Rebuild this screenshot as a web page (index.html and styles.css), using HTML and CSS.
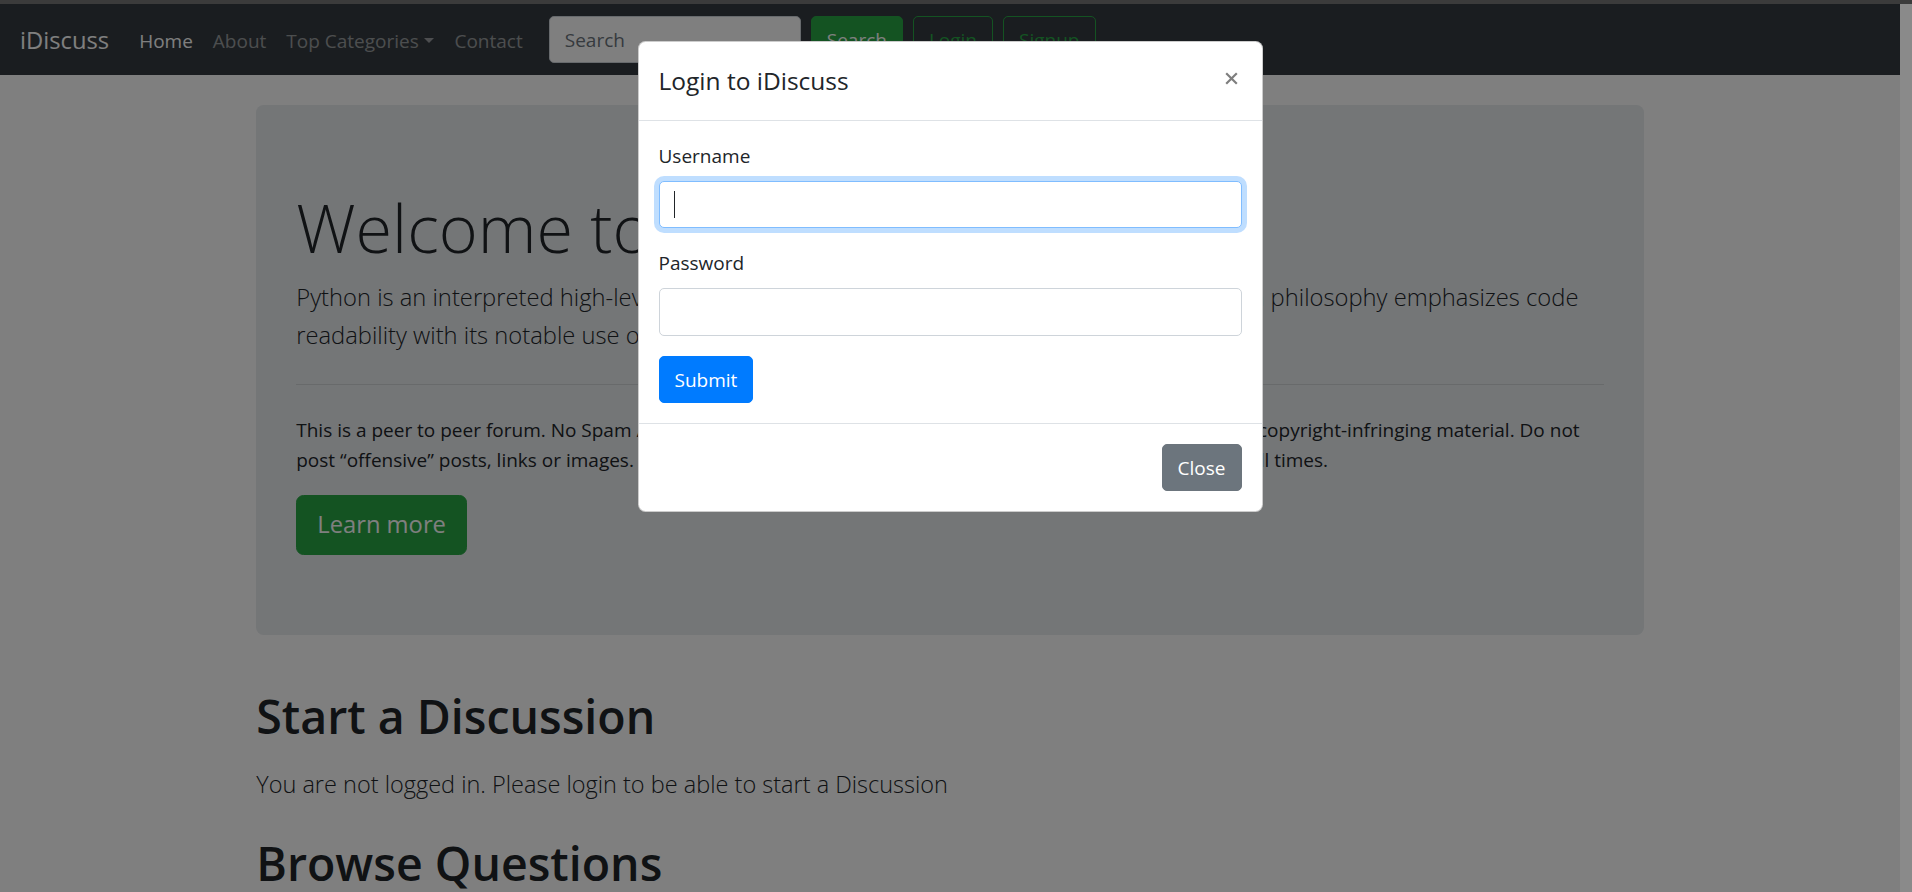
FILE: index.html
```html
<!DOCTYPE html>
<html lang="en">
<head>
<meta charset="utf-8">
<title>iDiscuss - Coding Forums</title>
<link rel="stylesheet" href="styles.css">
</head>
<body>
<div class="window-edge"></div>
<div class="viewport">
  <div class="page">
    <nav class="navbar">
      <a class="brand" href="#">iDiscuss</a>
      <ul class="nav">
        <li><a class="nav-link active" href="#">Home</a></li>
        <li><a class="nav-link" href="#">About</a></li>
        <li><a class="nav-link dropdown-toggle" href="#">Top Categories</a></li>
        <li><a class="nav-link" href="#">Contact</a></li>
      </ul>
      <form class="search-form">
        <input class="form-control search-input" type="search" placeholder="Search">
        <button class="btn btn-success" type="button">Search</button>
      </form>
      <div class="auth">
        <button class="btn btn-outline-success" type="button">Login</button>
        <button class="btn btn-outline-success" type="button">Signup</button>
      </div>
    </nav>

    <main class="container">
      <section class="jumbotron">
        <h1 class="display-4">Welcome to iDiscuss Forums</h1>
        <p class="lead">Python is an interpreted high-level general-purpose programming language. Its core design philosophy emphasizes code readability with its notable use of significant indentation.</p>
        <hr>
        <p class="rules">This is a peer to peer forum. No Spam / Advertising / Self-promotion in the forum is not allowed. Do not post copyright-infringing material. Do not post “offensive” posts, links or images. Do not cross post questions. Remain respectful of other members at all times.</p>
        <div class="jumbo-actions">
          <a class="btn btn-success btn-lg" href="#">Learn more</a>
        </div>
      </section>

      <h1 class="section-title">Start a Discussion</h1>
      <p class="lead notice">You are not logged in. Please login to be able to start a Discussion</p>
      <h1 class="section-title">Browse Questions</h1>
    </main>

    <div class="backdrop"></div>

    <div class="modal">
      <div class="modal-dialog">
        <div class="modal-content">
          <div class="modal-header">
            <h5 class="modal-title">Login to iDiscuss</h5>
            <button type="button" class="close" aria-label="Close">
              <svg class="close-icon" viewBox="0 0 13 13" width="13" height="13" aria-hidden="true">
                <path d="M1.2 1.2 L11.8 11.8 M11.8 1.2 L1.2 11.8" stroke="currentColor" stroke-width="2.2" fill="none"/>
              </svg>
            </button>
          </div>
          <form class="modal-body">
            <div class="form-group">
              <label for="username">Username</label>
              <div class="input-wrap">
                <input type="text" class="form-control wide is-focused" id="username">
                <span class="text-caret"></span>
              </div>
            </div>
            <div class="form-group">
              <label for="password">Password</label>
              <input type="password" class="form-control wide" id="password">
            </div>
            <button type="button" class="btn btn-primary">Submit</button>
          </form>
          <div class="modal-footer">
            <button type="button" class="btn btn-secondary">Close</button>
          </div>
        </div>
      </div>
    </div>
  </div>
  <div class="scroll-strip"></div>
</div>
</body>
</html>
```

FILE: styles.css
```css
* { box-sizing: border-box; }

html, body {
  margin: 0;
  height: 100%;
  overflow: hidden;
}

body {
  font-family: "Open Sans", "Noto Sans", sans-serif;
  font-size: 19px;
  line-height: 30px;
  color: #212529;
  background: #3b3b3b;
}

.window-edge {
  height: 4px;
  background: #3b3b3b;
}

.viewport {
  display: flex;
  height: 888px;
}

.page {
  position: relative;
  flex: 1;
  background: #fff;
  overflow: hidden;
}

.scroll-strip {
  width: 12px;
  background: #8a8a8a;
}

/* Navbar */
.navbar {
  display: flex;
  align-items: center;
  height: 71px;
  padding: 10px 20px;
  background: #343a40;
}

.brand {
  font-size: 23.75px;
  line-height: 37.5px;
  padding: 7px 0 5px;
  margin-right: 20px;
  color: #fff;
  text-decoration: none;
}

.nav {
  display: flex;
  list-style: none;
  margin: 0;
  padding: 0;
}

.nav-link {
  display: block;
  padding: 11px 10px 9px;
  color: rgba(255, 255, 255, .5);
  text-decoration: none;
}

.nav-link.active { color: #fff; }

.dropdown-toggle::after {
  content: "";
  display: inline-block;
  margin-left: .3em;
  vertical-align: .255em;
  border-top: .3em solid;
  border-right: .3em solid transparent;
  border-left: .3em solid transparent;
  border-bottom: 0;
}

.search-form {
  display: flex;
  align-items: center;
  margin: 0 0 0 16px;
}

.form-control {
  display: block;
  height: 47.5px;
  padding: 8px 15px 7px;
  font-family: inherit;
  font-size: 19px;
  line-height: 30px;
  color: #495057;
  background: #fff;
  border: 1.25px solid #ced4da;
  border-radius: 5px;
  outline: none;
}

.form-control::placeholder { color: #6c757d; }

.search-input {
  width: 252px;
  margin-right: 10px;
}

.btn {
  display: inline-block;
  font-family: inherit;
  font-size: 19px;
  font-weight: 400;
  line-height: 30px;
  padding: 8px 15px 7px;
  border: 1.25px solid transparent;
  border-radius: 5px;
  text-align: center;
  text-decoration: none;
  cursor: pointer;
}

.btn-success {
  color: #fff;
  background: #28a745;
  border-color: #28a745;
}

.btn-outline-success {
  color: #28a745;
  background: transparent;
  border-color: #28a745;
}

.btn-primary {
  color: #fff;
  background: #007bff;
  border-color: #007bff;
}

.btn-secondary {
  color: #fff;
  background: #6c757d;
  border-color: #6c757d;
}

.auth {
  display: flex;
  gap: 10px;
  margin-left: 10px;
}

/* Content */
.container {
  width: 1425px;
  margin: 0 auto;
  padding: 30px 18.75px 0;
}

.jumbotron {
  background: #e9ecef;
  border-radius: 7.5px;
  padding: 80px 40px;
  margin-bottom: 51px;
}

.display-4 {
  font-size: 66.5px;
  font-weight: 300;
  line-height: 84px;
  margin: 0 0 10px;
}

.lead {
  font-size: 23.75px;
  font-weight: 300;
  line-height: 37.5px;
  margin: 0 0 20px;
}

hr {
  margin: 30px 0;
  border: 0;
  border-top: 1.25px solid rgba(0, 0, 0, .1);
}

.rules { margin: 0 0 20px; }

.jumbo-actions { display: flex; }

.btn-lg {
  font-size: 23.75px;
  line-height: 37.5px;
  padding: 10px 20px;
  border-radius: 7.5px;
}

.section-title {
  font-size: 46.5px;
  font-weight: 600;
  line-height: 60px;
  margin: 0 0 20px;
}

.notice {
  font-size: 23.5px;
  margin: 0 0 30px;
}

/* Modal */
.backdrop {
  position: absolute;
  inset: 0;
  background: rgba(0, 0, 0, .5);
}

.modal {
  position: absolute;
  inset: 0;
  overflow: hidden;
}

.modal-dialog {
  width: 625px;
  margin: 37px auto 0;
}

.modal-content {
  display: flex;
  flex-direction: column;
  background: #fff;
  border: 1.25px solid rgba(0, 0, 0, .2);
  border-radius: 7.5px;
}

.modal-header {
  display: flex;
  align-items: flex-start;
  justify-content: space-between;
  padding: 20px;
  border-bottom: 1.25px solid #dee2e6;
}

.modal-title {
  margin: 0;
  font-size: 24.5px;
  font-weight: 500;
  line-height: 37.5px;
}

.close {
  display: block;
  padding: 30px 24px 0 20px;
  margin: -20px -20px -20px auto;
  background: transparent;
  border: 0;
  color: #000;
  opacity: .5;
  cursor: pointer;
}

.close-icon { display: block; }

.modal-body {
  margin: 0;
  padding: 20px;
}

.form-group { margin-bottom: 20px; }

label {
  display: inline-block;
  margin-bottom: 10px;
}

.form-control.wide { width: 100%; }

.is-focused {
  border-color: #80bdff;
  box-shadow: 0 0 0 5px rgba(0, 123, 255, .25);
}

.input-wrap { position: relative; }

.text-caret {
  position: absolute;
  left: 15px;
  top: 10px;
  width: 1px;
  height: 27px;
  background: #212529;
}

.modal-footer {
  display: flex;
  justify-content: flex-end;
  align-items: center;
  padding: 15px;
  border-top: 1.25px solid #dee2e6;
}

.modal-footer .btn { margin: 5px; }
```
